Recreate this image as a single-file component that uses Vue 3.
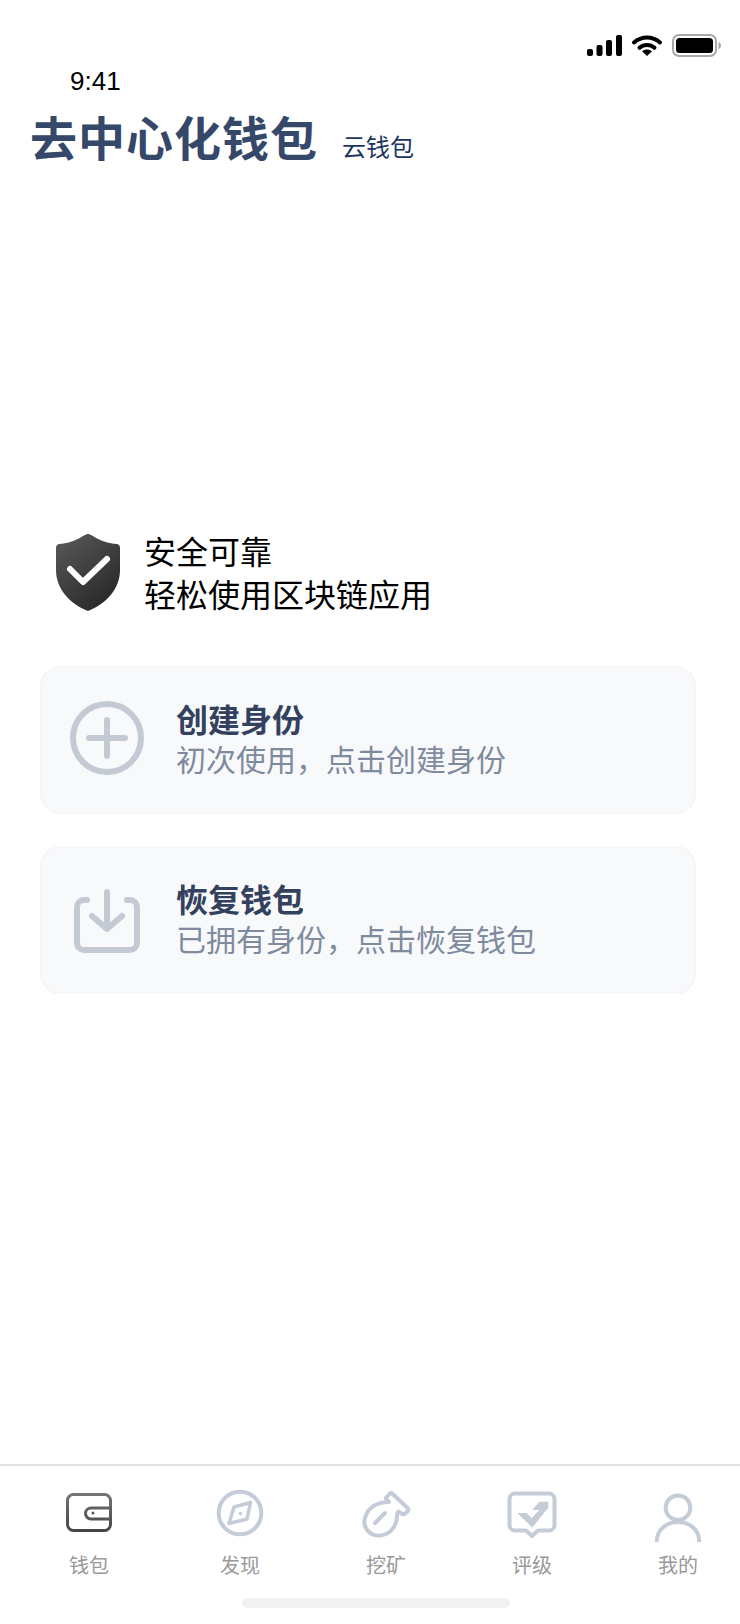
<template>
  <div class="page">
    <div class="status-icons">
      <svg class="signal" width="35" height="21" viewBox="0 0 35 21">
        <rect x="0" y="14" width="6" height="7" rx="2" />
        <rect x="9.5" y="10" width="6" height="11" rx="2" />
        <rect x="19" y="5" width="6" height="16" rx="2" />
        <rect x="29" y="0" width="6" height="21" rx="2" />
      </svg>
      <svg class="wifi" width="30" height="21" viewBox="0 0 30 21">
        <path d="M2 7.5C9.5 .8 20.5 .8 28 7.5" fill="none" stroke="#000" stroke-width="4" stroke-linecap="round" />
        <path d="M7.5 12.8C11.8 9 18.2 9 22.5 12.8" fill="none" stroke="#000" stroke-width="4" stroke-linecap="round" />
        <path d="M15 21L10 16.2C13 13.8 17 13.8 20 16.2Z" />
      </svg>
      <svg class="battery" width="49" height="23" viewBox="0 0 49 23">
        <rect x="1" y="1" width="43" height="21" rx="6" fill="none" stroke="#a8a8a8" stroke-width="2" />
        <rect x="4" y="4" width="37" height="15" rx="3.5" />
        <path d="M46.5 8v7c1.500-.5 2.500-2 2.500-3.500s-1-3-2.500-3.500z" fill="#a8a8a8" />
      </svg>
    </div>
    <div class="time">9:41</div>

    <div class="brand">
      <h1>去中心化钱包</h1>
      <span>云钱包</span>
    </div>

    <div class="intro">
      <svg width="64" height="77" viewBox="0 0 64 77">
        <defs>
          <linearGradient id="shieldFill" x1="0.1" y1="0" x2="0.8" y2="1">
            <stop offset="0" stop-color="#585858" />
            <stop offset="1" stop-color="#262626" />
          </linearGradient>
        </defs>
        <path d="M32 0C36 0 44 9 61 10Q64 10.500 64 14V36C64 55 50 70 32 77C14 70 0 55 0 36V14Q0 10.500 3 10C20 9 28 0 32 0Z" fill="url(#shieldFill)" />
        <path d="M14 35L27 48L51 25" fill="none" stroke="#fff" stroke-width="6" stroke-linecap="round" stroke-linejoin="round" />
      </svg>
      <div class="intro-text">
        <div>安全可靠</div>
        <div>轻松使用区块链应用</div>
      </div>
    </div>

    <div v-for="card in cards" :key="card.title" class="card">
      <svg width="74" height="74" viewBox="0 0 74 74" fill="none" stroke="#c3cad4" stroke-width="6" stroke-linecap="round" stroke-linejoin="round">
        <template v-if="card.icon === 'plus'">
          <circle cx="37" cy="37" r="34" />
          <path d="M19 37H55M37 19V55" />
        </template>
        <template v-else>
          <path d="M17 19H14a7 7 0 0 0-7 7V62a7 7 0 0 0 7 7H60a7 7 0 0 0 7-7V26a7 7 0 0 0-7-7H57" />
          <path d="M37 11V47M22 35L37 48L52 35" />
        </template>
      </svg>
      <div class="card-text">
        <div class="card-title">{{ card.title }}</div>
        <div class="card-sub">{{ card.sub }}</div>
      </div>
    </div>

    <nav class="tabbar">
      <div v-for="tab in tabs" :key="tab.label" class="tab">
        <svg width="52" height="52" viewBox="0 0 52 52" fill="none" stroke="#c4ccd7" stroke-width="4" stroke-linecap="round" stroke-linejoin="round">
          <template v-if="tab.icon === 'wallet'">
            <defs>
              <linearGradient id="walletStroke" gradientUnits="userSpaceOnUse" x1="0" y1="3" x2="0" y2="42">
                <stop offset="0" stop-color="#757575" />
                <stop offset="1" stop-color="#444" />
              </linearGradient>
            </defs>
            <rect x="4.500" y="4.500" width="43" height="36" rx="6" stroke="url(#walletStroke)" stroke-width="3" />
            <path d="M47 18H28a5.500 5.500 0 0 0 0 11H47" stroke="url(#walletStroke)" stroke-width="3" />
            <circle cx="30" cy="23" r="1.500" fill="#555" stroke="none" />
          </template>
          <template v-else-if="tab.icon === 'compass'">
            <circle cx="26" cy="23" r="21.300" />
            <path d="M36.500 12.500L33 29L15 33.500L20 17Z" stroke-width="3.500" />
            <circle cx="26.500" cy="23.500" r="1.700" fill="#c4ccd7" stroke="none" />
          </template>
          <template v-else-if="tab.icon === 'mine'">
            <path d="M29 12L26.500 9.500Q25.500 8 26.800 7L30 3.500Q31 2.800 32.200 3.500L48 18.500Q49 19.800 48 21L44.500 24Q43.500 24.800 42.300 24L38.500 21.500L37 24.500C37.500 33 33 41 26 44C20 46.500 13 46 8.500 41.500C4 37 3 31 6.500 24C10 16 20 11.500 29 12Z" />
            <path d="M15 33L25 23" />
          </template>
          <template v-else-if="tab.icon === 'rating'">
            <path d="M9 3.500H43a5.500 5.500 0 0 1 5.500 5.500V35a5.500 5.500 0 0 1-5.500 5.500H32L26 46L20 40.500H9A5.500 5.500 0 0 1 3.500 35V9A5.500 5.500 0 0 1 9 3.500Z" />
            <path d="M11.300 23H20.700L25.700 28.300L33.300 20H26.300L33.300 11.700H42.300V17.700L26.300 37.500Z" fill="#c4ccd7" stroke="none" />
          </template>
          <template v-else>
            <circle cx="26" cy="17.700" r="12.300" />
            <path d="M4.700 52C4.700 40 14 32 26 32S47.300 40 47.300 52" stroke-linecap="butt" />
          </template>
        </svg>
        <span>{{ tab.label }}</span>
      </div>
    </nav>
    <div class="home-indicator"></div>
  </div>
</template>

<script setup>
const cards = [
  { icon: 'plus', title: '创建身份', sub: '初次使用，点击创建身份' },
  { icon: 'download', title: '恢复钱包', sub: '已拥有身份，点击恢复钱包' }
];

const tabs = [
  { icon: 'wallet', label: '钱包' },
  { icon: 'compass', label: '发现' },
  { icon: 'mine', label: '挖矿' },
  { icon: 'rating', label: '评级' },
  { icon: 'user', label: '我的' }
];
</script>

<style scoped>
.page {
  width: 740px;
  height: 1624px;
  display: flex;
  flex-direction: column;
  background: #fff;
  font-family: "Noto Sans CJK SC", "Noto Sans", sans-serif;
  overflow: hidden;
}

.status-icons {
  display: flex;
  align-items: center;
  justify-content: flex-end;
  gap: 10px;
  height: 23px;
  margin-top: 34px;
  padding-right: 19px;
}

.time {
  margin: 10px 0 0 70px;
  font-family: "Liberation Sans", Arial, sans-serif;
  font-size: 26px;
  line-height: 28px;
  color: #000;
}

.brand {
  display: flex;
  align-items: baseline;
  margin: 11px 0 0 30px;
  color: #36486a;
}

.brand h1 {
  margin: 0;
  font-size: 47px;
  line-height: 60px;
  letter-spacing: 1px;
  font-weight: 700;
}

.brand span {
  margin-left: 24px;
  font-size: 24px;
  color: #1b3562;
}

.intro {
  display: flex;
  align-items: center;
  gap: 24px;
  margin: 363px 0 0 56px;
}

.intro-text {
  font-size: 32px;
  line-height: 43px;
  color: #000;
}

.card {
  display: flex;
  align-items: center;
  gap: 32px;
  box-sizing: border-box;
  width: 656px;
  height: 148px;
  margin: 32px 0 0 40px;
  padding: 0 0 4px 28px;
  background: #f8f9fb;
  border: 2px solid #f5f6f8;
  border-radius: 20px;
}

.intro + .card {
  margin-top: 51px;
}

.card-title {
  font-size: 32px;
  line-height: 38px;
  font-weight: 700;
  color: #33415f;
}

.card-sub {
  margin-top: 2px;
  font-size: 30px;
  line-height: 38px;
  color: #7e8a9d;
}

.tabbar {
  display: flex;
  gap: 46px;
  margin-top: auto;
  padding: 24px 0 0 39px;
  border-top: 2px solid #e3e3e3;
}

.tab {
  display: flex;
  flex-direction: column;
  align-items: center;
  width: 100px;
}

.tab:first-child {
  margin-right: 5px;
}

.tab span {
  margin-top: 9px;
  font-size: 20px;
  line-height: 28px;
  color: #999;
}

.home-indicator {
  width: 268px;
  height: 10px;
  margin: 19px 0 16px 242px;
  background: #f2f2f2;
  border-radius: 5px;
}
</style>
